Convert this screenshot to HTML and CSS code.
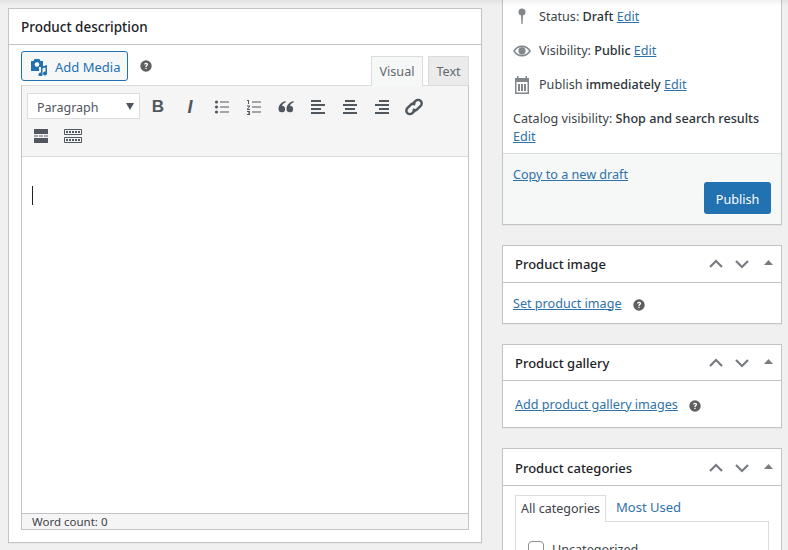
FILE: index.html
```html
<!DOCTYPE html>
<html>
<head>
<meta name="viewport" content="width=device-width, initial-scale=1">
<link rel="stylesheet" href="styles.css">
</head>
<body>

<div class="top-shade"></div>

<div class="page">

  <!-- main column -->
  <div class="main">
    <div class="box desc">
      <h2 class="desc-title">Product description</h2>
      <div class="media-row">
        <span class="add-media">
          <svg class="media-icon" width="18" height="18" viewBox="0 0 18 18"><path d="M1 3h2.500l1-2h5l1 2H13v6H9v4H1z" fill="#2271b1"/><circle cx="7" cy="6.500" r="2.300" fill="#fff"/><path d="M17 7v8.500a2 2 0 1 1-1.500-1.900V9.500l-3 .7v6.300a2 2 0 1 1-1.500-1.900V9z" fill="#2271b1"/></svg>
          Add Media
        </span>
        <svg class="help" width="12" height="12" viewBox="0 0 12 12"><use href="#help"/></svg>
        <div class="tabs">
          <span class="tab tab-on">Visual</span>
          <span class="tab tab-text">Text</span>
        </div>
      </div>
      <div class="editor">
        <div class="toolbar">
          <div class="tool-row tool-row-one">
            <span class="format">Paragraph<i class="caret"></i></span>
            <span class="tool"><b class="glyph-b">B</b></span>
            <span class="tool"><i class="glyph-i">I</i></span>
            <span class="tool"><svg width="16" height="16" viewBox="0 0 16 16" fill="#50575e"><circle cx="2.500" cy="3" r="1.600"/><circle cx="2.500" cy="8" r="1.600"/><circle cx="2.500" cy="13" r="1.600"/><path d="M6 2.500h9v1H6zM6 7.500h9v1H6zM6 12.500h9v1H6z"/></svg></span>
            <span class="tool"><svg width="16" height="16" viewBox="0 0 16 16" fill="#50575e"><path d="M1 1h2v4H2V2H1zM1 6.500h3v1L2 10h2v1H1v-1l2-2.500H1zM1 12h3v4H1v-1h2v-.5H2v-1h1V13H1zM6 2.500h9v1H6zM6 7.500h9v1H6zM6 12.500h9v1H6z"/></svg></span>
            <span class="tool"><svg width="16" height="16" viewBox="0 0 16 16" fill="#50575e"><path d="M7.500 2C4 3 .5 5.500 .5 10a3.300 3.300 0 1 0 3.500-3.300C4.200 5.200 6 4 7.500 3.500zM15.500 2C12 3 8.500 5.500 8.500 10a3.300 3.300 0 1 0 3.500-3.300c.2-1.500 2-2.700 3.500-3.200z"/></svg></span>
            <span class="tool"><svg width="16" height="16" viewBox="0 0 16 16" fill="#50575e"><path d="M1 1h10v2H1zM1 5h14v2H1zM1 9h10v2H1zM1 13h14v2H1z"/></svg></span>
            <span class="tool"><svg width="16" height="16" viewBox="0 0 16 16" fill="#50575e"><path d="M3 1h10v2H3zM1 5h14v2H1zM3 9h10v2H3zM1 13h14v2H1z"/></svg></span>
            <span class="tool"><svg width="16" height="16" viewBox="0 0 16 16" fill="#50575e"><path d="M5 1h10v2H5zM1 5h14v2H1zM5 9h10v2H5zM1 13h14v2H1z"/></svg></span>
            <span class="tool"><svg width="20" height="20" viewBox="0 0 18 18" fill="none" stroke="#50575e" stroke-width="2.200"><path d="M8 6l2.500-2.500a3 3 0 0 1 4.500 4.500l-3 3a3 3 0 0 1-4 0"/><path d="M10 12l-2.500 2.500a3 3 0 0 1-4.500-4.500l3-3a3 3 0 0 1 4 0"/></svg></span>
          </div>
          <div class="tool-row tool-row-two">
            <span class="tool"><svg width="16" height="16" viewBox="0 0 16 16" fill="#50575e"><path d="M1 1h14v5H1zM1 7.500h4v1H1zM6 7.500h4v1H6zM11 7.500h4v1h-4zM1 10h14v5H1z"/></svg></span>
            <span class="tool"><svg width="20" height="16" viewBox="0 0 20 16" fill="none" stroke="#50575e"><path d="M1.500 1.500h17v5h-17zM1.500 9.500h17v5h-17z"/><path d="M3 4h14M3 12h14" stroke-width="2" stroke-dasharray="2 1"/></svg></span>
          </div>
        </div>
        <div class="edit-area"><span class="text-cursor"></span></div>
        <div class="status-bar">Word count: 0</div>
      </div>
    </div>
  </div>

  <!-- side column -->
  <div class="side">

    <div class="box publish">
      <div class="pub-rows">
        <div class="pub-row">
          <svg class="pub-icon" width="20" height="20" viewBox="0 0 20 20" fill="#82878c"><circle cx="10" cy="5" r="3.500"/><path d="M9 7h2l-.4 10h-1.200z"/></svg>
          <span>Status: <b>Draft</b> <a href="#">Edit</a></span>
        </div>
        <div class="pub-row">
          <svg class="pub-icon" width="20" height="20" viewBox="0 0 20 20"><path d="M1 10c2-3.500 5-5.500 9-5.500s7 2 9 5.500c-2 3.500-5 5.500-9 5.500S3 13.500 1 10z" fill="#82878c"/><path d="M3 10c1.500-2.300 3.500-3.800 7-3.800s5.500 1.500 7 3.800c-1.500 2.300-3.500 3.800-7 3.800S4.500 12.300 3 10z" fill="#fff"/><circle cx="10" cy="9.800" r="3.600" fill="#82878c"/></svg>
          <span>Visibility: <b>Public</b> <a href="#">Edit</a></span>
        </div>
        <div class="pub-row">
          <svg class="pub-icon" width="20" height="20" viewBox="0 0 20 20" fill="#82878c"><path d="M3 3h2V1h1.500v2h7V1H15v2h2v16H3zM4.500 7v10.500h11V7z"/><path d="M6 9h2v7H6zM9 9h2v7H9zM12 9h2v7h-2z"/></svg>
          <span>Publish <b>immediately</b> <a href="#">Edit</a></span>
        </div>
        <div class="pub-catalog">Catalog visibility: <b>Shop and search results</b><br><a href="#">Edit</a></div>
      </div>
      <div class="pub-foot">
        <a href="#">Copy to a new draft</a>
        <span class="publish-btn">Publish</span>
      </div>
    </div>

    <div class="box">
      <div class="side-head">
        <h3>Product image</h3>
        <svg class="handles" width="70" height="12" viewBox="0 0 70 12"><use href="#handles"/></svg>
      </div>
      <div class="side-body img-body">
        <a href="#">Set product image</a>
        <svg class="help" width="12" height="12" viewBox="0 0 12 12"><use href="#help"/></svg>
      </div>
    </div>

    <div class="box">
      <div class="side-head gallery-head">
        <h3>Product gallery</h3>
        <svg class="handles" width="70" height="12" viewBox="0 0 70 12"><use href="#handles"/></svg>
      </div>
      <div class="side-body gallery-body">
        <a href="#">Add product gallery images</a>
        <svg class="help" width="12" height="12" viewBox="0 0 12 12"><use href="#help"/></svg>
      </div>
    </div>

    <div class="box cats">
      <div class="side-head cats-head">
        <h3>Product categories</h3>
        <svg class="handles" width="70" height="12" viewBox="0 0 70 12"><use href="#handles"/></svg>
      </div>
      <div class="cat-body">
        <div class="cat-tabs">
          <span class="cat-tab">All categories</span>
          <a class="cat-other">Most Used</a>
        </div>
        <div class="cat-list">
          <label class="cat-item"><span class="check"></span>Uncategorized</label>
        </div>
      </div>
    </div>

  </div>
</div>

<svg class="defs" width="0" height="0">
  <defs>
    <g id="help">
      <circle cx="6" cy="6" r="5.700" fill="#5f5f5f"/>
      <path d="M4 4.600C4.100 3.400 5 2.800 6.100 2.800c1.200 0 2 .7 2 1.700 0 1.500-1.500 1.300-1.500 2.500H5.300c0-1.800 1.400-1.700 1.400-2.500 0-.3-.3-.6-.7-.6-.4 0-.7.3-.7.7zM5.300 7.700h1.300V9H5.300z" fill="#fff"/>
    </g>
    <g id="handles">
      <path d="M1 9l6-6 6 6M27 3l6 6 6-6" fill="none" stroke="#787c82" stroke-width="2.200"/>
      <path d="M55 7l4.500-5 4.500 5z" fill="#787c82"/>
    </g>
  </defs>
</svg>

</body>
</html>
```

FILE: styles.css
```css
* {
  box-sizing: border-box;
}

html, body {
  height: 550px;
  overflow: hidden;
}

body {
  margin: 0;
  background: #f0f0f1;
  color: #3c434a;
  font-family: "Noto Sans", "Open Sans", sans-serif;
  font-size: 12.600px;
  line-height: 18px;
}

a {
  color: #2f72a8;
  text-decoration: underline;
}

b {
  font-weight: 500;
  color: #2c3338;
}

.defs {
  position: absolute;
}

/* faint shadow of the bar that sits above the scrolled page */
.top-shade {
  position: absolute;
  top: 0;
  left: 0;
  right: 0;
  height: 6px;
  background: linear-gradient(rgba(0, 0, 0, 0.06), rgba(0, 0, 0, 0));
}

.page {
  display: flex;
  gap: 20px;
  padding-left: 8px;
}

.main {
  width: 474px;
  padding-top: 8px;
}

.side {
  width: 280px;
  display: flex;
  flex-direction: column;
  gap: 20px;
}

.box {
  background: #fff;
  border: 1px solid #c3c4c7;
  box-shadow: 0 1px 1px rgba(0, 0, 0, 0.04);
}

/* Product description */
.desc {
  height: 535px;
}

.desc-title {
  margin: 0;
  height: 36px;
  padding: 0 12px;
  border-bottom: 1px solid #c3c4c7;
  font-size: 13.500px;
  font-weight: 500;
  line-height: 36px;
  color: #1d2327;
}

.media-row {
  display: flex;
  align-items: flex-start;
  height: 40px;
  padding: 6px 12px 0;
}

.add-media {
  display: flex;
  align-items: center;
  gap: 7px;
  width: 107px;
  height: 30px;
  padding: 1px 0 0 8px;
  border: 1px solid #2271b1;
  border-radius: 3px;
  background: #f6f7f7;
  color: #2271b1;
  font-size: 13px;
}

.media-row > .help {
  margin: 9px 0 0 12px;
}

.tabs {
  display: flex;
  gap: 5px;
  margin-left: auto;
  padding-top: 5px;
}

.tab {
  height: 29px;
  border: 1px solid #dcdcde;
  border-bottom: 0;
  background: #ebebeb;
  color: #646970;
  text-align: center;
  line-height: 30px;
}

.tab-text {
  width: 41px;
}

.tab-on {
  position: relative;
  width: 52px;
  height: 30px;
  background: #f6f7f7;
}

.editor {
  margin: 0 12px;
  height: 445px;
  display: flex;
  flex-direction: column;
  border: 1px solid #c3c4c7;
  border-top-color: #dcdcde;
}

.toolbar {
  height: 71px;
  padding: 7px 5px 0;
  background: #f5f5f5;
  border-bottom: 1px solid #dcdcde;
}

.tool-row {
  display: flex;
  align-items: center;
  height: 26px;
  margin-bottom: 4px;
}

.tool-row-one .tool {
  padding-top: 2px;
}

.tool-row-two {
  margin-left: -2px;
}

.format {
  position: relative;
  width: 113px;
  height: 26px;
  margin-right: 2px;
  padding-left: 9px;
  border: 1px solid #dcdcde;
  background: #fff;
  color: #50575e;
  font-size: 12.500px;
  line-height: 27px;
}

.caret {
  position: absolute;
  right: 5px;
  top: 9px;
  border: 4.500px solid transparent;
  border-top: 7px solid #50575e;
  border-bottom: 0;
}

.tool {
  display: flex;
  align-items: center;
  justify-content: center;
  width: 32px;
  height: 26px;
}

.glyph-b, .glyph-i {
  color: #50575e;
  font-size: 17px;
  font-family: "Liberation Sans", sans-serif;
  font-weight: bold;
}

.glyph-i {
  font-style: italic;
  font-size: 18px;
}

.edit-area {
  flex: 1;
  padding: 29px 10px 0;
}

.text-cursor {
  display: block;
  width: 1px;
  height: 19px;
  background: #222;
}

.status-bar {
  height: 16px;
  padding-left: 10px;
  border-top: 1px solid #c3c4c7;
  background: #f5f5f5;
  font-size: 11.500px;
  line-height: 15px;
}

/* Publish box */
.publish {
  height: 225px;
  border-top: 0;
}

.pub-rows {
  height: 154px;
  padding: 8px 10px 0;
  border-bottom: 1px solid #dcdcde;
}

.pub-row {
  display: flex;
  align-items: center;
  gap: 7px;
  height: 18px;
  margin-bottom: 16px;
}

.pub-icon {
  flex: none;
  margin-left: -1px;
}

.pub-foot {
  position: relative;
  height: 70px;
  padding: 12px 10px 0;
  background: #f6f7f7;
}

.publish-btn {
  position: absolute;
  right: 10px;
  top: 28px;
  width: 67px;
  height: 32px;
  border-radius: 3px;
  background: #2271b1;
  color: #fff;
  text-align: center;
  line-height: 35px;
}

/* Side boxes */
.side-head {
  display: flex;
  align-items: center;
  justify-content: space-between;
  height: 37px;
  padding: 0 2px 0 12px;
  border-bottom: 1px solid #c3c4c7;
}

.gallery-head {
  height: 36px;
}

.cats-head {
  padding-top: 2px;
}

.side-head h3 {
  margin: 0;
  font-size: 13px;
  font-weight: 500;
  color: #1d2327;
}

.side-body {
  display: flex;
  align-items: center;
  gap: 12px;
}

.side-body .help {
  margin-top: 2px;
}

.img-body {
  height: 40px;
  padding: 1px 0 0 10px;
}

.gallery-body {
  height: 46px;
  padding: 2px 0 0 12px;
  gap: 11px;
}

.cats {
  height: 130px;
}

.cat-body {
  padding: 9px 12px 0;
}

.cat-tabs {
  display: flex;
  height: 27px;
  font-size: 13px;
}

.cat-tab {
  position: relative;
  z-index: 1;
  width: 91px;
  height: 27px;
  border: 1px solid #dcdcde;
  border-bottom: 0;
  background: #fff;
  font-size: 12.500px;
  text-align: center;
  line-height: 25px;
}

.cat-other {
  padding-left: 10px;
  color: #2f72a8;
  text-decoration: none;
  line-height: 25px;
}

.cat-list {
  height: 60px;
  margin-top: -1px;
  padding: 19px 12px 0;
  border: 1px solid #dcdcde;
}

.cat-item {
  display: flex;
  gap: 8px;
  white-space: nowrap;
}

.check {
  flex: none;
  width: 16px;
  height: 16px;
  border: 1px solid #8c8f94;
  border-radius: 4px;
  background: #fff;
}
```
